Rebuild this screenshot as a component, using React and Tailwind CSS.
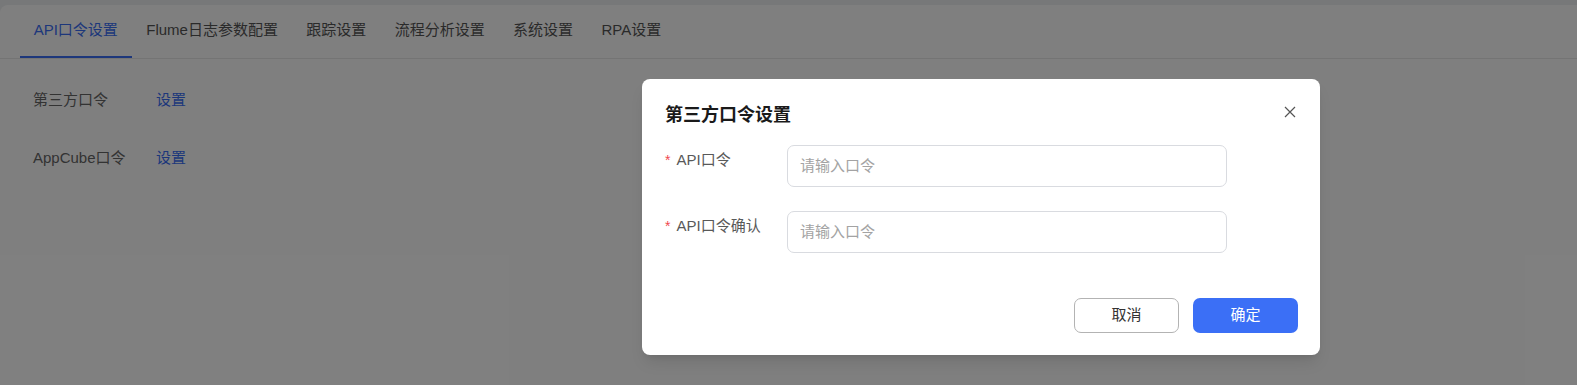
import React from "react";

const FONT = { fontFamily: '"Liberation Sans", "Noto Sans CJK SC", sans-serif' };

const tabs = ["API口令设置", "Flume日志参数配置", "跟踪设置", "流程分析设置", "系统设置", "RPA设置"];

function Field({ label }) {
  return (
    <div className="flex items-start">
      <div className="w-[122px] h-[30px] flex items-center text-[15px] text-[#595959]">
        <span className="text-[#f0494f] text-[14px] mr-[6px] leading-none">*</span>
        <span>{label}</span>
      </div>
      <div className="w-[440px] h-[42px] rounded-[7px] border border-[#d9dbe0] flex items-center px-[12px] text-[15px] text-[#a3a3a3]">
        请输入口令
      </div>
    </div>
  );
}

export default function App() {
  return (
    <div className="relative w-full h-[385px] overflow-hidden bg-[#eef0f3] pt-[5px]" style={FONT}>
      <div className="h-full bg-white rounded-tl-lg">
        <div className="flex pl-[19.5px] border-b border-[#e8e8e8]">
          {tabs.map((t, i) => (
            <div
              key={t}
              className={
                "h-[53px] flex items-center px-[14.2px] text-[15px] " +
                (i === 0 ? "border-b-2 border-[#3b6ff6] text-[#3b6ff6]" : "border-b-2 border-transparent text-[#555555]")
              }
            >
              {t}
            </div>
          ))}
        </div>
        <div className="flex flex-col gap-[36px] pt-[30px] px-[33px] text-[15px]">
          <div className="flex items-center h-[22px]">
            <span className="w-[123px] text-[#666666]">第三方口令</span>
            <span className="text-[#3b6ff6]">设置</span>
          </div>
          <div className="flex items-center h-[22px]">
            <span className="w-[123px] text-[#666666]">AppCube口令</span>
            <span className="text-[#3b6ff6]">设置</span>
          </div>
        </div>
      </div>

      <div className="absolute inset-0 bg-black/50" />

      <div className="absolute left-[642px] top-[79px] w-[678px] h-[276px] bg-white rounded-[8px] shadow-lg pl-[23px] pr-[22px] pt-[24px] pb-[22px] flex flex-col">
        <div className="h-[24px] flex items-center text-[18px] font-bold text-[#1a1a1a]">第三方口令设置</div>
        <button className="absolute right-[24px] top-[27px] w-[12px] h-[12px] text-[#555]">
          <svg viewBox="0 0 12 12" width="12" height="12" fill="none" stroke="currentColor" strokeWidth="1.2">
            <path d="M1 1L11 11M11 1L1 11" />
          </svg>
        </button>
        <div className="flex flex-col gap-[24px] mt-[18px]">
          <Field label="API口令" />
          <Field label="API口令确认" />
        </div>
        <div className="flex justify-end gap-[14px] mt-auto">
          <button className="w-[105px] h-[35px] rounded-[7px] border border-[#b3b3b3] bg-white text-[15px] text-[#333333]">取消</button>
          <button className="w-[105px] h-[35px] rounded-[7px] bg-[#3b6ff6] text-[15px] text-white">确定</button>
        </div>
      </div>
    </div>
  );
}
